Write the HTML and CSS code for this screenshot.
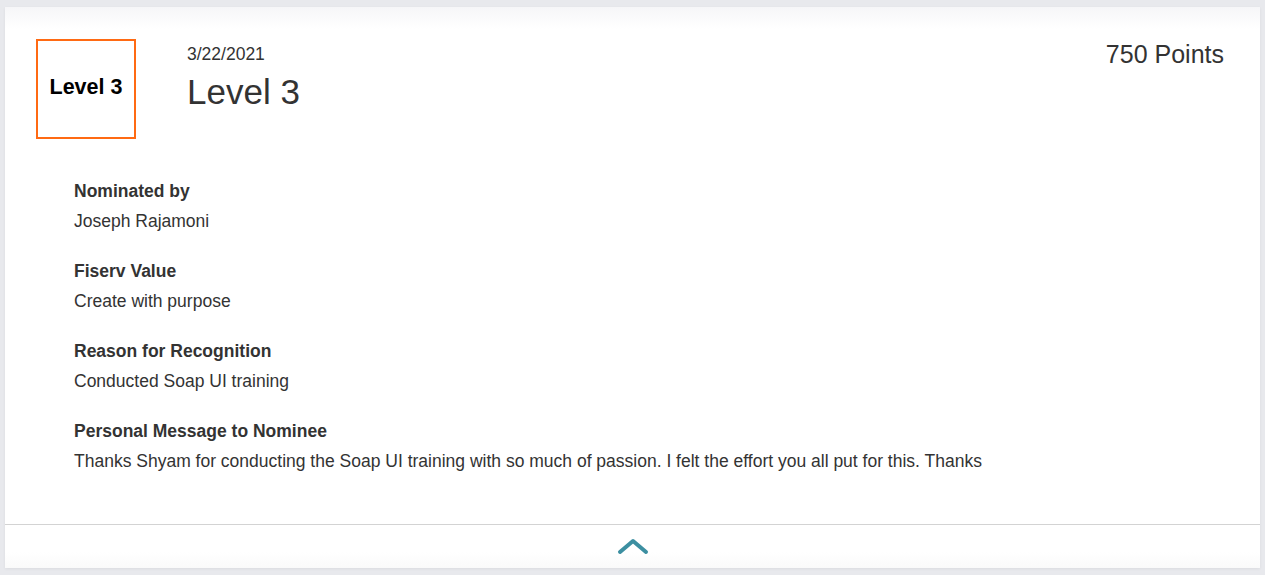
FILE: index.html
```html
<!DOCTYPE html>
<html lang="en">
<head>
<meta charset="utf-8">
<link rel="stylesheet" href="styles.css">
</head>
<body>
<div class="card">
  <div class="card-body">
    <div class="header">
      <div class="badge"><span>Level 3</span></div>
      <div class="title-block">
        <div class="date">3/22/2021</div>
        <div class="title">Level 3</div>
      </div>
      <div class="points">750 Points</div>
    </div>
    <div class="details">
      <div class="field">
        <div class="label">Nominated by</div>
        <div class="value">Joseph Rajamoni</div>
      </div>
      <div class="field">
        <div class="label">Fiserv Value</div>
        <div class="value">Create with purpose</div>
      </div>
      <div class="field">
        <div class="label">Reason for Recognition</div>
        <div class="value">Conducted Soap UI training</div>
      </div>
      <div class="field">
        <div class="label">Personal Message to Nominee</div>
        <div class="value">Thanks Shyam for conducting the Soap UI training with so much of passion. I felt the effort you all put for this. Thanks</div>
      </div>
    </div>
  </div>
  <div class="footer">
    <svg class="chevron" width="32" height="17" viewBox="0 0 32 17"><path d="M3 14 L16 3 L29 14" fill="none" stroke="#3c8fa1" stroke-width="4" stroke-linecap="round" stroke-linejoin="round"/></svg>
  </div>
</div>
</body>
</html>
```
FILE: styles.css
```css
html, body {
  margin: 0;
  height: 100%;
}
body {
  background: #e8e9ed;
  padding: 7px 5px;
  box-sizing: border-box;
  font-family: "Liberation Sans", Arial, sans-serif;
  color: #333;
}
.card {
  background: linear-gradient(#f6f6f8 0px, #ffffff 22px, #ffffff 545px, #fafafa 100%);
  height: 561px;
  display: flex;
  flex-direction: column;
  box-shadow: 0 1px 3px rgba(0,0,0,0.06);
}
.card-body {
  flex: 1;
  padding: 32px 36px 0 31px;
}
.header {
  display: flex;
  align-items: flex-start;
}
.badge {
  width: 96px;
  height: 96px;
  border: 2px solid #ff6a13;
  display: flex;
  align-items: center;
  justify-content: center;
  flex-shrink: 0;
}
.badge span {
  font-weight: bold;
  font-size: 21.5px;
  color: #000;
  margin-top: -4px;
}
.title-block {
  margin-left: 51px;
  flex: 1;
  padding-top: 5px;
}
.date {
  font-size: 17.5px;
  line-height: 20px;
}
.title {
  font-size: 35px;
  line-height: 40px;
  margin-top: 8px;
}
.points {
  font-size: 25px;
  line-height: 30px;
  padding-top: 0;
}
.details {
  padding-left: 38px;
  margin-top: 37px;
  display: flex;
  flex-direction: column;
  gap: 20px;
}
.field {
  display: flex;
  flex-direction: column;
}
.label {
  font-weight: bold;
  font-size: 17.5px;
  line-height: 30px;
}
.value {
  font-size: 17.5px;
  line-height: 30px;
}
.footer {
  height: 43px;
  border-top: 1px solid #d3d3d3;
  display: flex;
  justify-content: center;
  align-items: center;
}
.chevron {
  display: block;
  margin-top: 0;
}
```
